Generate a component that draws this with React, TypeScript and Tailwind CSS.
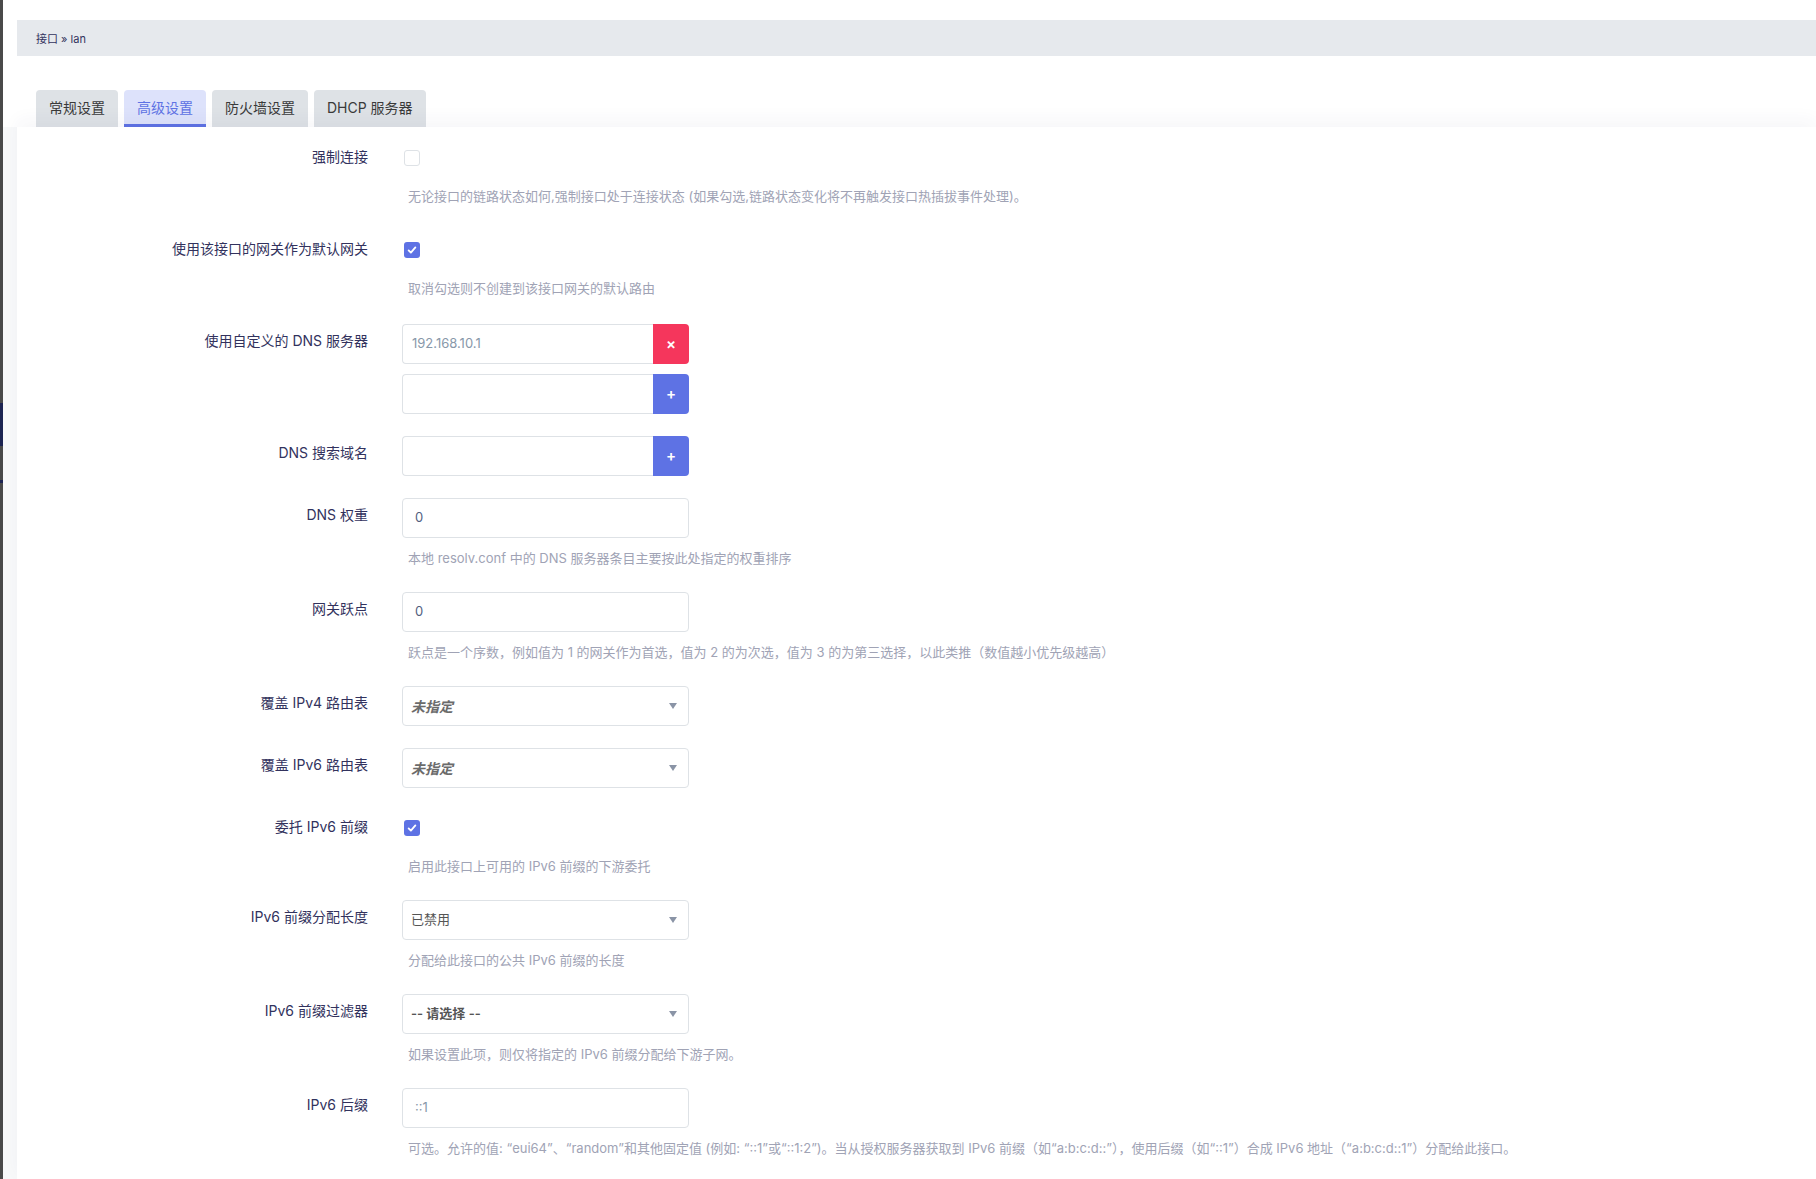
import React from "react";

type RowProps = {
  label: string;
  desc?: string;
  loose?: boolean;
  children: React.ReactNode;
};

const Row: React.FC<RowProps> = ({ label, desc, loose, children }) => (
  <div className={`flex ${loose ? "pb-[24px]" : "pb-[22px]"}`}>
    <div className="w-[351px] shrink-0 text-right text-[14px] leading-[20px] pt-[7px] text-[#32325d]">
      {label}
    </div>
    <div className="ml-[34px] flex flex-col">
      {children}
      {desc && (
        <div className="mt-[10px] mb-[2px] pl-[6px] text-[13px] leading-[20px] text-[#a0a3b5] whitespace-nowrap">
          {desc}
        </div>
      )}
    </div>
  </div>
);

const Checkbox: React.FC<{ checked?: boolean }> = ({ checked }) => (
  <div className="h-[36px] flex items-center pl-[2px]">
    {checked ? (
      <div className="w-[16px] h-[16px] rounded-[3px] bg-[#5e72e4] flex items-center justify-center">
        <svg width="12" height="12" viewBox="0 0 16 16">
          <path
            d="M3.5 8.5l3 3L12.5 4.5"
            fill="none"
            stroke="white"
            strokeWidth="2.4"
            strokeLinecap="round"
            strokeLinejoin="round"
          />
        </svg>
      </div>
    ) : (
      <div className="w-[16px] h-[16px] rounded-[3px] border border-[#dee2e6] bg-white" />
    )}
  </div>
);

const TextBox: React.FC<{ value?: string; muted?: boolean }> = ({ value, muted }) => (
  <div
    className={`w-[287px] h-[40px] rounded-[4px] border border-[#dee2e6] bg-white flex items-center pl-[12px] text-[13px] ${
      muted ? "text-[#8898aa]" : "text-[#525f7f]"
    }`}
  >
    {value}
  </div>
);

const GroupBox: React.FC<{ value?: string; remove?: boolean }> = ({ value, remove }) => (
  <div className="w-[287px] h-[40px] flex">
    <div className="flex-1 rounded-l-[4px] border border-r-0 border-[#dee2e6] bg-white flex items-center pl-[9px] text-[13px] text-[#8898aa]">
      {value}
    </div>
    <div
      className={`w-[36px] rounded-r-[4px] flex items-center justify-center text-white text-[15px] font-semibold ${
        remove ? "bg-[#f5365c]" : "bg-[#5e72e4]"
      }`}
    >
      {remove ? "×" : "+"}
    </div>
  </div>
);

const SelectBox: React.FC<{ value: string; variant?: "italic" | "bold" | "plain" }> = ({
  value,
  variant = "plain",
}) => (
  <div className="w-[287px] h-[40px] rounded-[4px] border border-[#dee2e6] bg-white flex items-center justify-between pl-[8px] pr-[11px] text-[13px] text-[#525f7f]">
    <span
      className={
        variant === "italic"
          ? "italic font-bold text-[14px] text-[#6b6b6b]"
          : variant === "bold"
          ? "font-semibold text-[#555]"
          : "text-[#555]"
      }
    >
      {value}
    </span>
    <svg width="8" height="6" viewBox="0 0 8 6">
      <path d="M0 0h8L4 6z" fill="#8a94a6" />
    </svg>
  </div>
);

export default function App() {
  const tabs = ["常规设置", "高级设置", "防火墙设置", "DHCP 服务器"];

  return (
    <div className="flex min-h-[1179px] bg-white font-['Inter','Noto_Sans_CJK_SC',sans-serif]">
      {/* sidebar edge */}
      <div className="w-[3px] shrink-0 bg-[#4a4a4a] flex flex-col">
        <div className="h-[403px]" />
        <div className="h-[43px] bg-[#1d2552]" />
        <div className="h-[34px]" />
        <div className="h-[3px] bg-[#1d2552]" />
      </div>

      <div className="flex-1 flex flex-col pt-[20px]">
        {/* breadcrumb */}
        <div className="ml-[14px] h-[36px] bg-[#e6e9ed] flex items-center pl-[19px] pt-[2px] text-[11px] text-[#32325d]">
          接口 » lan
        </div>

        {/* tabs */}
        <div className="mt-[34px] pl-[33px] flex gap-[6px]">
          {tabs.map((t, i) => (
            <div
              key={t}
              className={`h-[37px] px-[13px] flex items-center rounded-t-[4px] text-[14px] border-b-[3px] ${
                i === 1
                  ? "bg-[#dde2fb] text-[#5e72e4] border-[#5e72e4]"
                  : "bg-[#dee2e6] text-[#3a3a3a] border-transparent"
              }`}
            >
              {t}
            </div>
          ))}
        </div>

        {/* panel */}
        <div className="flex-1 flex bg-[#f8f9fa]">
          <div className="flex-1 ml-[14px] bg-white pt-[13px] shadow-[0_-8px_16px_rgba(50,50,93,0.04)]">
            <Row
              loose
              label="强制连接"
              desc="无论接口的链路状态如何,强制接口处于连接状态 (如果勾选,链路状态变化将不再触发接口热插拔事件处理)。"
            >
              <Checkbox />
            </Row>
            <Row loose label="使用该接口的网关作为默认网关" desc="取消勾选则不创建到该接口网关的默认路由">
              <Checkbox checked />
            </Row>
            <Row label="使用自定义的 DNS 服务器">
              <div className="flex flex-col gap-[10px]">
                <GroupBox value="192.168.10.1" remove />
                <GroupBox />
              </div>
            </Row>
            <Row label="DNS 搜索域名">
              <GroupBox />
            </Row>
            <Row label="DNS 权重" desc="本地 resolv.conf 中的 DNS 服务器条目主要按此处指定的权重排序">
              <TextBox value="0" />
            </Row>
            <Row
              label="网关跃点"
              desc="跃点是一个序数，例如值为 1 的网关作为首选，值为 2 的为次选，值为 3 的为第三选择，以此类推（数值越小优先级越高）"
            >
              <TextBox value="0" />
            </Row>
            <Row label="覆盖 IPv4 路由表">
              <SelectBox value="未指定" variant="italic" />
            </Row>
            <Row label="覆盖 IPv6 路由表">
              <SelectBox value="未指定" variant="italic" />
            </Row>
            <Row label="委托 IPv6 前缀" desc="启用此接口上可用的 IPv6 前缀的下游委托">
              <Checkbox checked />
            </Row>
            <Row label="IPv6 前缀分配长度" desc="分配给此接口的公共 IPv6 前缀的长度">
              <SelectBox value="已禁用" />
            </Row>
            <Row label="IPv6 前缀过滤器" desc="如果设置此项，则仅将指定的 IPv6 前缀分配给下游子网。">
              <SelectBox value="-- 请选择 --" variant="bold" />
            </Row>
            <Row
              label="IPv6 后缀"
              desc="可选。允许的值: “eui64”、“random”和其他固定值 (例如: “::1”或“::1:2”)。当从授权服务器获取到 IPv6 前缀（如“a:b:c:d::”），使用后缀（如“::1”）合成 IPv6 地址（“a:b:c:d::1”）分配给此接口。"
            >
              <TextBox value="::1" muted />
            </Row>
          </div>
        </div>
      </div>
    </div>
  );
}
